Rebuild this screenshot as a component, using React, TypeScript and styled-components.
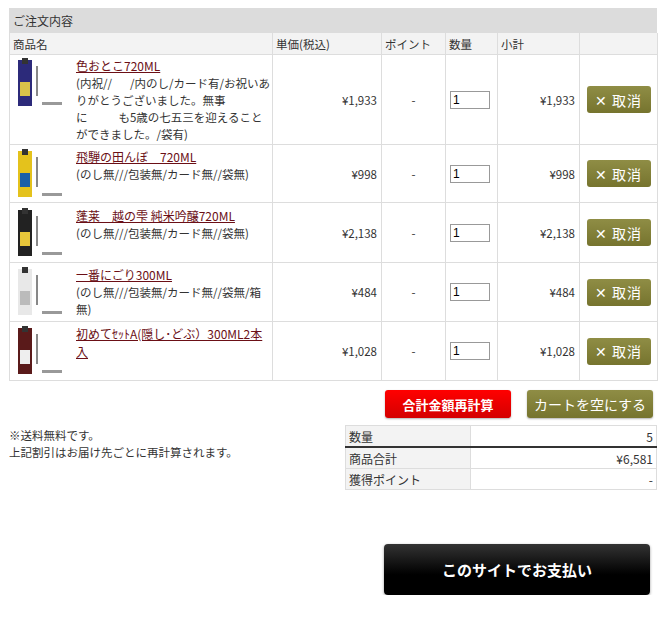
import React from "react";
import styled, { createGlobalStyle } from "styled-components";

const Global = createGlobalStyle`
  body { margin: 0; background: #fff; font-family: "Noto Sans CJK JP", "Noto Sans", sans-serif; font-size: 12px; color: #333; }
`;

const Page = styled.div`
  padding: 8px 10px 0 9px;
  width: 648px;
`;
const Title = styled.div`
  background: #dcdcdc;
  height: 25px;
  line-height: 25px;
  padding-left: 4px;
  font-size: 12px;
`;
const Table = styled.table`
  width: 648px;
  border-collapse: collapse;
  table-layout: fixed;
  td, th { border: 1px solid #ddd; font-size: 11.5px; }
`;
const Th = styled.th`
  background: #f3f3f3;
  font-weight: normal;
  text-align: left;
  height: 21px;
  padding: 0 3px;
  border-top: none !important;
`;
const Td = styled.td<{ $align?: string }>`
  text-align: ${(p) => p.$align || "right"};
  padding: 0 4px;
  vertical-align: middle;
`;
const ProdCell = styled.div`
  display: flex;
  gap: 10px;
  padding: 0 0 0 2px;
  align-items: flex-start;
`;
const Thumb = styled.div`
  width: 54px;
  height: 54px;
  flex: none;
  display: flex;
  align-items: center;
  justify-content: center;
`;
const ProdText = styled.div`
  line-height: 17px;
  padding-top: 1px;
`;
const PLink = styled.a`
  color: #6b0f16;
  text-decoration: underline;
  font-size: 12px;
`;
const Qty = styled.input`
  width: 34px;
  height: 16px;
  border: 1px solid #999;
  font-size: 12px;
  padding: 0 2px;
  text-align: left;
`;
const Cancel = styled.button`
  background: linear-gradient(#8f8d45, #76742e);
  color: #fff;
  border: none;
  border-radius: 3px;
  width: 64px;
  height: 27px;
  font-size: 14px;
  font-family: inherit;
  letter-spacing: 1px;
  white-space: nowrap;
  padding: 0;
`;
const BtnRow = styled.div`
  display: flex;
  justify-content: flex-end;
  gap: 16px;
  margin-top: 9px;
  padding-right: 4px;
`;
const Btn = styled.button<{ $red?: boolean }>`
  width: 126px;
  height: 28px;
  border: none;
  border-radius: 3px;
  color: #fff;
  padding: 0;
  white-space: nowrap;
  font-family: inherit;
  font-size: ${(p) => (p.$red ? "13px" : "14px")};
  font-weight: ${(p) => (p.$red ? "bold" : "normal")};
  background: ${(p) => (p.$red ? "linear-gradient(#f00, #d40000)" : "linear-gradient(#8f8d45, #76742e)")};
  box-shadow: 0 1px 2px rgba(0,0,0,0.3);
`;
const Bottom = styled.div`
  display: flex;
  justify-content: space-between;
  margin-top: 7px;
`;
const Note = styled.div`
  font-size: 11.5px;
  line-height: 17px;
  padding-top: 2px;
`;
const Sum = styled.table`
  width: 312px;
  border-collapse: collapse;
  td { border: 1px solid #ddd; height: 20px; padding: 0 3px; font-size: 12px; }
`;
const SumLabel = styled.td`
  background: #f3f3f3;
  width: 118px;
`;
const SumRow = styled.tr<{ $thick?: boolean }>`
  td { border-bottom: ${(p) => (p.$thick ? "2px solid #333" : "1px solid #ddd")}; }
`;
const PayWrap = styled.div`
  display: flex;
  justify-content: flex-end;
  padding-right: 7px;
  margin-top: 54px;
`;
const Pay = styled.button`
  width: 266px;
  height: 51px;
  background: linear-gradient(#333, #000 60%);
  color: #fff;
  border: none;
  border-radius: 4px;
  font-family: inherit;
  font-weight: bold;
  font-size: 15px;
  box-shadow: 0 1px 3px rgba(0,0,0,0.4);
`;

const Bottle = ({ c, label }: { c: string; label: string }) => (
  <svg width="54" height="54" viewBox="0 0 54 54">
    <rect x="6" y="4" width="14" height="46" fill={c} />
    <rect x="10" y="2" width="6" height="6" fill="#333" />
    <rect x="8" y="26" width="10" height="14" fill={label} />
    <rect x="24" y="10" width="2" height="30" fill="#888" />
    <rect x="30" y="46" width="20" height="3" fill="#999" />
  </svg>
);

const items = [
  { name: "色おとこ720ML", opt: <>(内祝//&nbsp;&nbsp;&nbsp;&nbsp;&nbsp;&nbsp;&nbsp;/内のし/カード有/お祝いありがとうございました。無事に&nbsp;&nbsp;&nbsp;&nbsp;&nbsp;&nbsp;&nbsp;&nbsp;&nbsp;&nbsp;&nbsp;&nbsp;も5歳の七五三を迎えることができました。/袋有)</>, price: "¥1,933", h: 90, c: "#2c2a7a", l: "#d8c24a" },
  { name: "飛騨の田んぼ　720ML", opt: "(のし無///包装無/カード無//袋無)", price: "¥998", h: 58, c: "#e4c21c", l: "#1a5fa8" },
  { name: "蓬莱　越の雫 純米吟醸720ML", opt: "(のし無///包装無/カード無//袋無)", price: "¥2,138", h: 60, c: "#222", l: "#e7c63a" },
  { name: "一番にごり300ML", opt: "(のし無///包装無/カード無//袋無/箱無)", price: "¥484", h: 59, c: "#e8e8e8", l: "#bbb" },
  { name: "初めてｾｯﾄA(隠し･どぶ）300ML2本入", opt: null, price: "¥1,028", h: 59, c: "#5a1a1a", l: "#eee" },
];

export default function App() {
  return (
    <Page>
      <Global />
      <Title>ご注文内容</Title>
      <Table>
        <colgroup>
          <col style={{ width: 263 }} />
          <col style={{ width: 109 }} />
          <col style={{ width: 64 }} />
          <col style={{ width: 52 }} />
          <col style={{ width: 82 }} />
          <col style={{ width: 78 }} />
        </colgroup>
        <thead>
          <tr>
            <Th>商品名</Th><Th>単価(税込)</Th><Th>ポイント</Th><Th>数量</Th><Th>小計</Th><Th></Th>
          </tr>
        </thead>
        <tbody>
          {items.map((it) => (
            <tr key={it.name} style={{ height: it.h }}>
              <Td $align="left" style={{ padding: 0 }}>
                <ProdCell>
                  <Thumb><Bottle c={it.c} label={it.l} /></Thumb>
                  <ProdText>
                    <PLink>{it.name}</PLink>
                    {it.opt && <div>{it.opt}</div>}
                  </ProdText>
                </ProdCell>
              </Td>
              <Td>{it.price}</Td>
              <Td $align="center">-</Td>
              <Td $align="left"><Qty defaultValue="1" /></Td>
              <Td>{it.price}</Td>
              <Td $align="center"><Cancel>✕ 取消</Cancel></Td>
            </tr>
          ))}
        </tbody>
      </Table>
      <BtnRow>
        <Btn $red>合計金額再計算</Btn>
        <Btn>カートを空にする</Btn>
      </BtnRow>
      <Bottom>
        <Note>※送料無料です。<br />上記割引はお届け先ごとに再計算されます。</Note>
        <Sum>
          <tbody>
            <SumRow $thick><SumLabel>数量</SumLabel><td style={{ textAlign: "right" }}>5</td></SumRow>
            <SumRow><SumLabel>商品合計</SumLabel><td style={{ textAlign: "right" }}>¥6,581</td></SumRow>
            <SumRow><SumLabel>獲得ポイント</SumLabel><td style={{ textAlign: "right" }}>-</td></SumRow>
          </tbody>
        </Sum>
      </Bottom>
      <PayWrap><Pay>このサイトでお支払い</Pay></PayWrap>
    </Page>
  );
}
